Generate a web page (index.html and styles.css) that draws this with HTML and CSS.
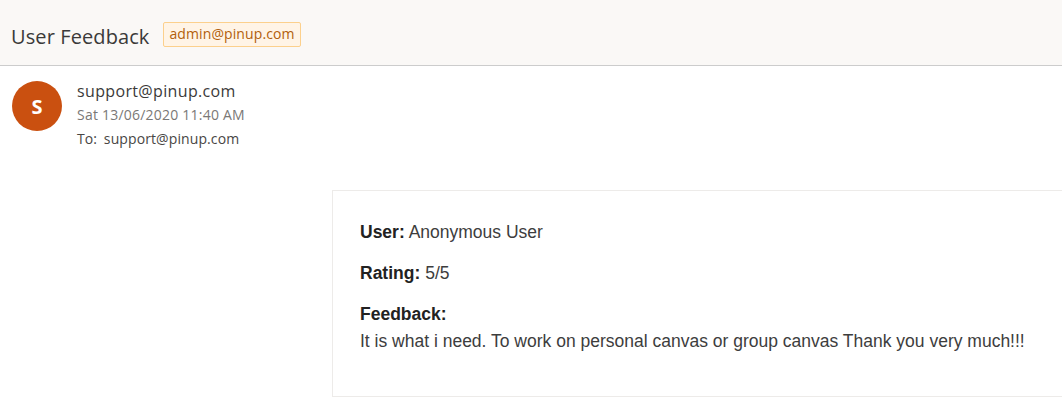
FILE: index.html
```html
<!DOCTYPE html>
<html lang="en">
<head>
  <meta charset="UTF-8" />
  <title>User Feedback</title>
  <link rel="stylesheet" href="styles.css">
</head>
<body>

<div class="header">
  <span class="title">User Feedback</span>
  <span class="badge">admin@pinup.com</span>
</div>

<div class="sender">
  <div class="avatar">S</div>
  <div class="sender-text">
    <div class="from">support@pinup.com</div>
    <div class="date">Sat 13/06/2020 11:40 AM</div>
    <div class="to"><span class="to-label">To:</span> support@pinup.com</div>
  </div>
</div>

<div class="message">
  <p><b>User:</b> Anonymous User</p>
  <p><b>Rating:</b> 5/5</p>
  <p><b>Feedback:</b><br>It is what i need. To work on personal canvas or group canvas Thank you very much!!!</p>
</div>

</body>
</html>
```
FILE: styles.css
```css
* {
  box-sizing: border-box;
}
html, body {
  margin: 0;
  padding: 0;
  height: 100%;
  background: #fff;
  overflow: hidden;
}
body {
  font-family: "Open Sans", "Noto Sans", sans-serif;
  color: #323130;
}
.header {
  display: flex;
  align-items: center;
  gap: 14px;
  height: 66px;
  padding: 8px 0 0 11px;
  background: #faf8f6;
  border-bottom: 1px solid #ccc;
}
.title {
  font-size: 20px;
  font-weight: 500;
  letter-spacing: 0.1px;
  color: #3b3a39;
}
.badge {
  height: 25px;
  margin-top: -4px;
  padding: 0 5px;
  font-size: 14px;
  letter-spacing: 0.1px;
  line-height: 22px;
  color: #b25f0c;
  background: #fff4e6;
  border: 1px solid #fcd08c;
  border-radius: 2px;
}
.sender {
  display: flex;
  gap: 15px;
  padding: 13px 0 0 12px;
}
.avatar {
  width: 50px;
  height: 50px;
  margin-top: 2px;
  border-radius: 50%;
  background: #ca5010;
  color: #fff;
  font-size: 20px;
  font-weight: 700;
  line-height: 52px;
  text-align: center;
}
.from {
  font-size: 16px;
  letter-spacing: 0.35px;
  line-height: 24px;
  color: #3b3a39;
}
.date {
  font-size: 14px;
  letter-spacing: 0.22px;
  line-height: 24px;
  color: #7a7876;
}
.to {
  font-size: 14px;
  letter-spacing: 0.1px;
  line-height: 24px;
  color: #484644;
}
.to-label {
  font-weight: 500;
  margin-right: 3px;
}
.message {
  margin: 39px 0 0 332px;
  height: 207px;
  padding: 28px 0 0 27px;
  background: #fff;
  border: 1px solid #edebe9;
  border-right: none;
  font-family: "Liberation Sans", Arial, sans-serif;
  font-size: 17.5px;
  line-height: 27px;
  color: #3d3d3d;
}
.message p {
  margin: 0 0 14px;
}
.message b {
  color: #222;
}
```
